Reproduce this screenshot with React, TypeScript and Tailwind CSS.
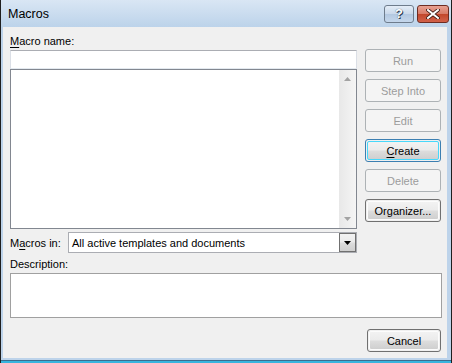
import React from "react";

const font = "font-['Segoe_UI','Liberation_Sans',Arial,sans-serif]";

function DialogButton({
  label,
  disabled,
  focused,
  underline,
}: {
  label: string;
  disabled?: boolean;
  focused?: boolean;
  underline?: number;
}) {
  const text =
    underline === undefined ? (
      label
    ) : (
      <>
        {label.slice(0, underline)}
        <span className="underline underline-offset-2">{label[underline]}</span>
        {label.slice(underline + 1)}
      </>
    );

  if (disabled) {
    return (
      <div className="h-[23px] w-full rounded-[3px] border border-[#adb2b5] bg-[#f4f4f4] flex items-center justify-center text-[#9c9c9c]">
        {text}
      </div>
    );
  }

  return (
    <div
      className={`h-[23px] w-full rounded-[3px] border ${
        focused ? "border-[#3c7fb1]" : "border-[#707070]"
      } p-px`}
    >
      <div
        className={`h-full w-full rounded-[2px] border ${
          focused ? "border-[#48d8fb]" : "border-[#fcfcfc]"
        } bg-[linear-gradient(to_bottom,#f2f2f2_0%,#ebebeb_48%,#dddddd_52%,#cfcfcf_100%)] flex items-center justify-center text-black`}
      >
        {text}
      </div>
    </div>
  );
}

function Triangle({ up, color }: { up?: boolean; color: string }) {
  return (
    <svg width="7" height="4" viewBox="0 0 7 4">
      <path d={up ? "M0 4 L3.5 0 L7 4 Z" : "M0 0 L7 0 L3.5 4 Z"} fill={color} />
    </svg>
  );
}

export default function App() {
  return (
    <div
      className={`w-[452px] h-[363px] flex flex-col bg-[#bdd3ea] border-l border-r border-[#1f1f1f] ${font} text-[11px] leading-[16px] text-black overflow-hidden`}
    >
      {/* Title bar */}
      <div className="h-[27px] shrink-0 flex items-center pl-[7px] pr-[2px] bg-[linear-gradient(to_bottom,#d9e6f4,#bcd3ea)]">
        <span className="text-[12.5px] text-black">Macros</span>
        <div className="ml-auto flex items-start gap-[3px]">
          <div className="w-[30px] h-[18px] rounded-[3px] border border-[#6e7c8c] bg-[linear-gradient(to_bottom,#e4edf7_0%,#c9d8ea_50%,#b3c8e0_51%,#c5d7ec_100%)] flex items-center justify-center">
            <span className="text-[13px] font-bold leading-none text-white [text-shadow:0_0_1px_#2c3e55,1px_1px_0_#2c3e55]">
              ?
            </span>
          </div>
          <div className="w-[32px] h-[18px] rounded-[3px] border border-[#6d2c22] bg-[linear-gradient(to_bottom,#e8a192_0%,#d77a66_50%,#c2462b_51%,#d2624a_100%)] flex items-center justify-center">
            <svg width="14" height="10" viewBox="0 0 14 10">
              <path
                d="M2 1 L12 9 M12 1 L2 9"
                stroke="#3a1610"
                strokeWidth="3.6"
                strokeLinecap="square"
              />
              <path
                d="M2 1 L12 9 M12 1 L2 9"
                stroke="#ffffff"
                strokeWidth="2"
                strokeLinecap="square"
              />
            </svg>
          </div>
        </div>
      </div>

      <div className="flex-1 flex min-h-0">
        <div className="w-[2px] bg-[#bdd3ea]" />
        {/* Body */}
        <div className="flex-1 bg-[#f0f0f0] pl-[7px] pr-[5px] pt-[6px] flex flex-col">
          <div className="flex items-start">
            <div className="w-[347px] flex flex-col">
              <div className="h-[16px]">
                <span className="underline underline-offset-2">M</span>acro name:
              </div>
              <div className="mt-px h-[19px] border border-[#abadb3] border-b-[#e3e9ef] border-x-[#dbdfe6] bg-white" />
              <div className="h-[160px] border border-[#828790] bg-white flex justify-end">
                <div className="w-[17px] h-full bg-[linear-gradient(to_right,#e8e8e8,#f5f5f5)] flex flex-col items-center justify-between py-[7px]">
                  <Triangle up color="#a3a3a3" />
                  <Triangle color="#a3a3a3" />
                </div>
              </div>
              <div className="mt-[3px] flex items-center">
                <div className="w-[58px]">
                  M<span className="underline underline-offset-2">a</span>cros in:
                </div>
                <div className="w-[289px] h-[21px] border border-[#abadb3] bg-white flex items-center pl-[3px]">
                  <span className="flex-1">All active templates and documents</span>
                  <div className="w-[17px] h-[19px] border border-[#707070] bg-[linear-gradient(to_bottom,#f2f2f2_0%,#ebebeb_48%,#dddddd_52%,#cfcfcf_100%)] flex items-center justify-center">
                    <Triangle color="#000000" />
                  </div>
                </div>
              </div>
            </div>
            <div className="ml-[8px] mt-[16px] w-[76px] flex flex-col gap-[7px]">
              <DialogButton label="Run" disabled />
              <DialogButton label="Step Into" disabled />
              <DialogButton label="Edit" disabled />
              <DialogButton label="Create" focused underline={0} />
              <DialogButton label="Delete" disabled />
              <DialogButton label="Organizer..." />
            </div>
          </div>
          <div className="mt-[3px] h-[16px]">Description:</div>
          <div className="mt-px h-[45px] border border-[#a0a0a0] bg-white" />
          <div className="mt-[11px] flex justify-end pr-px">
            <div className="w-[74px]">
              <DialogButton label="Cancel" />
            </div>
          </div>
        </div>
        <div className="w-[4px] bg-[#bdd3ea]" />
      </div>
      <div className="h-[5px] shrink-0 bg-[#bdd3ea] flex flex-col justify-end">
        <div className="h-px bg-[#3b6d8f]" />
        <div className="h-[2px] bg-[#38b4de]" />
      </div>
    </div>
  );
}
